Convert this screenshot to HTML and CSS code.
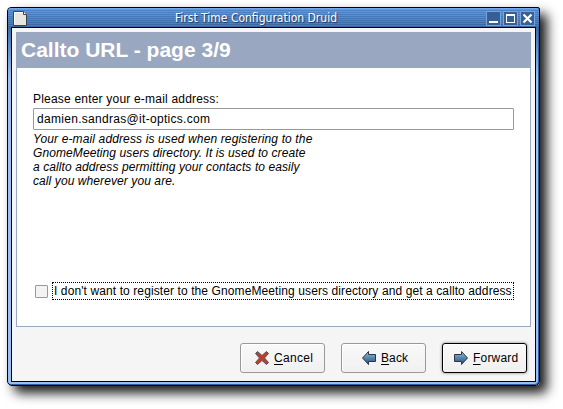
FILE: index.html
```html
<!DOCTYPE html>
<html lang="en">
<head>
<meta charset="utf-8">
<title>First Time Configuration Druid</title>
<link rel="stylesheet" href="styles.css">
</head>
<body>
<div class="window">
  <div class="titlebar">
    <svg class="doc" width="14" height="15" viewBox="0 0 14 15"><path d="M.5.5h10l3 3v11H.5z" fill="#e6e6e1" stroke="#39434e"/><path d="M1.5 13V1.5H10" fill="none" stroke="#fff"/><path d="M10.5.5v3h3" fill="#fff" stroke="#39434e"/></svg>
    <div class="title">First Time Configuration Druid</div>
    <div class="controls">
      <svg width="15" height="15" viewBox="0 0 15 15"><path class="ctl" d="M.5.5h14v14H.5z"/><path d="M3 10h9v2H3z" fill="#fff"/></svg>
      <svg width="15" height="15" viewBox="0 0 15 15"><path class="ctl" d="M.5.5h14v14H.5z"/><path d="M3 3h9v9H3zM4 5v6h7V5z" fill="#fff" fill-rule="evenodd"/></svg>
      <svg width="15" height="15" viewBox="0 0 15 15"><path class="ctl" d="M.5.5h14v14H.5z"/><path d="M3.5 3.5l8 8M11.5 3.5l-8 8" stroke="#fff" stroke-width="2.2"/></svg>
    </div>
  </div>
  <div class="client">
    <div class="panel">
      <h1>Callto URL - page 3/9</h1>
      <div class="form">
        <label class="label">Please enter your e-mail address:</label>
        <div class="entry">damien.sandras@it-optics.com</div>
        <p class="hint"><span class="lead">Your e-mail address is used when registering to the</span><br>GnomeMeeting users directory. It is used to create<br>a callto address permitting your contacts to easily<br>call you wherever you are.</p>
        <div class="check"><span class="box"></span><span class="focus">I don't want to register to the GnomeMeeting users directory and get a callto address</span></div>
      </div>
    </div>
    <div class="buttons">
      <div class="btn cancel"><svg width="16" height="16" viewBox="0 0 16 16"><path d="M1.5 3.500l2-2L8 5.500l4.500-4 2 2L10.500 8l4 4.500-2 2L8 10.500l-4.500 4-2-2L5.500 8z" fill="#b8402c" stroke="#57504d" stroke-linejoin="round"/></svg><span><u>C</u>ancel</span></div>
      <div class="btn back"><svg width="16" height="16" viewBox="0 0 16 16"><defs><linearGradient id="g" x2="0" y2="1"><stop stop-color="#9dbfdb"/><stop offset=".5" stop-color="#5685ae"/><stop offset="1" stop-color="#274c72"/></linearGradient></defs><path d="M1.500 8l6-6.500v3h7v7h-7v3z" fill="url(#g)" stroke="#2b3642" stroke-linejoin="round"/></svg><span><u>B</u>ack</span></div>
      <div class="btn forward"><svg width="16" height="16" viewBox="0 0 16 16"><path d="M14.500 8l-6-6.500v3h-7v7h7v3z" fill="url(#g)" stroke="#2b3642" stroke-linejoin="round"/></svg><span><u>F</u>orward</span></div>
    </div>
  </div>
</div>
</body>
</html>
```
FILE: styles.css
```css
* { box-sizing: border-box; }
body {
  margin: 0;
  padding: 7px;
  width: 563px;
  height: 409px;
  overflow: hidden;
  background: #fff;
  color: #000;
  font: 12px/14px "Liberation Sans", Arial, sans-serif;
  letter-spacing: .3px;
  white-space: nowrap;
}
svg { display: block; flex: none; }
.window {
  width: 533px;
  height: 379px;
  border: 1px solid #000;
  border-radius: 4px 2px 5px 5px;
  padding: 0 3px 3px;
  background: linear-gradient(#4380cd, #3c6fae 20px, #9bc0f2 70px, #9bc0f2);
  box-shadow: inset -1px -1px #315f9f, 7px 7px 12px 0 rgba(0,0,0,.9);
}
.titlebar {
  display: flex;
  align-items: center;
  height: 19px;
  margin: 0 -3px;
  padding: 0 4px 0 5px;
  border-top: 1px solid #75a9e9;
  border-radius: 3px 3px 0 0;
  background: repeating-linear-gradient(rgba(255,255,255,.07) 0 1px, rgba(0,0,0,.08) 1px 2px), linear-gradient(#5592df, #3d6ead);
}
.title {
  flex: 1;
  padding-right: 1px;
  text-align: center;
  color: #fff;
  font: 12px/18px "DejaVu Sans Condensed", "DejaVu Sans", sans-serif;
  font-stretch: condensed;
  letter-spacing: 0;
  text-shadow: 1px 1px 1px #16355f;
}
.controls { display: flex; gap: 2px; }
.ctl { fill: #365f96; stroke: #7ba5dc; }
.client {
  height: 355px;
  border: 1px solid #000;
  background: #f5f5f5;
  padding: 4px;
}
.panel {
  width: 515px;
  height: 295px;
  border: 1px solid #9aa7c1;
  border-top: 0;
  background: #fff;
}
h1 {
  margin: 0;
  height: 36px;
  padding-left: 4px;
  background: #9aa7c1;
  color: #fff;
  font: bold 21px/36px "Liberation Sans", Arial, sans-serif;
  letter-spacing: 0;
}
.form { padding: 24px 16px 0; }
.label { display: block; height: 16px; letter-spacing: .2px; }
.entry {
  height: 22px;
  width: 481px;
  border: 1px solid #999;
  border-radius: 1px;
  padding: 3px 3px;
}
.hint { margin: 2px 0 0; font-style: italic; letter-spacing: .09px; }
.lead { letter-spacing: .13px; }
.check { display: flex; align-items: center; margin: 94px 0 0 2px; }
.box { width: 13px; height: 13px; border: 1px solid #999; background: #f3f3f3; border-radius: 1px; margin-right: 4px; }
.focus { width: 462px; height: 18px; border: 1px dotted #000; padding: 1px; letter-spacing: .1px; }
.buttons { display: flex; gap: 16px; padding: 16px 4px 0 224px; }
.btn {
  display: flex;
  align-items: center;
  height: 30px;
  width: 85px;
  border: 1px solid #999;
  border-radius: 3px;
  background: linear-gradient(#f9f9f9, #f0f0f0);
  box-shadow: inset 1px 1px #fff;
}
.btn svg { margin-right: 4px; }
.cancel { padding-left: 13px; }
.back { padding-left: 19px; letter-spacing: .1px; }
.forward { padding-left: 10px; letter-spacing: .2px; border-color: #000; box-shadow: 0 0 3px #777, inset 1px 1px #fff; }
u { text-decoration-thickness: 1px; text-underline-offset: 2px; }
```
